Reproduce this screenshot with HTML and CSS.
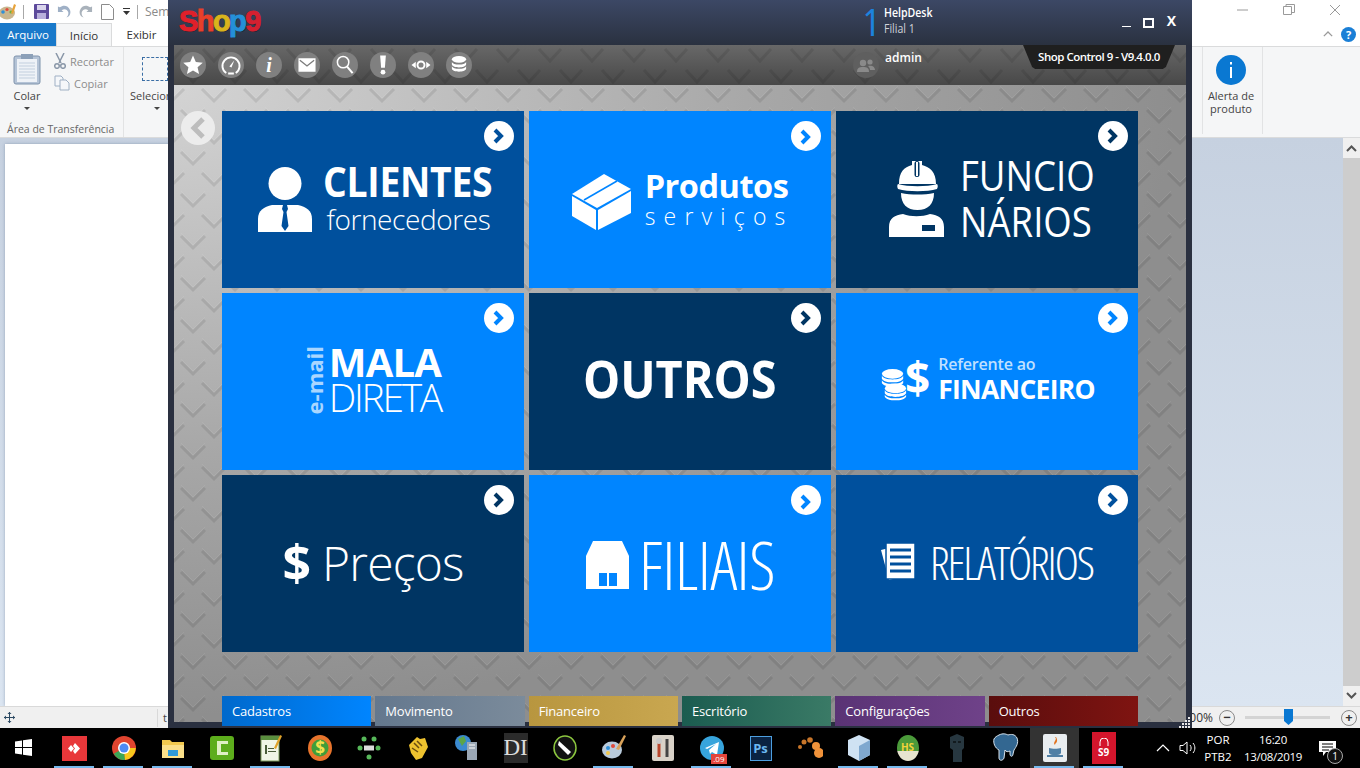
FILE: index.html
```html
<!DOCTYPE html>
<html lang="pt-BR">
<head>
    <meta charset="UTF-8" />
    <title>Shop Control 9</title>
    <link rel="stylesheet" href="styles.css">
</head>
<body>
    <div class="desktop">
        <!-- paint behind the shop window -->
        <div class="paint">
            <div class="qat">
                <svg width="17" height="18" viewBox="0 0 17 18"><ellipse cx="7" cy="10" rx="8" ry="6.500" fill="#c9b68e"/><circle cx="3" cy="9" r="1.800" fill="#2f8fd8"/><circle cx="7" cy="6.500" r="1.600" fill="#e04a3a"/><circle cx="11" cy="9" r="1.600" fill="#6cb33f"/><path d="M14 1l2 1-3 9-2-1z" fill="#e8a33a"/></svg>
                <span class="qat-sep"></span>
                <svg width="15" height="15" viewBox="0 0 15 15"><rect width="15" height="15" rx="1" fill="#5d4a9b"/><rect x="3" y="1" width="9" height="5" fill="#d9d4ec"/><rect x="3" y="9" width="9" height="6" fill="#b9b0dc"/></svg>
                <svg width="14" height="14" viewBox="0 0 15 14"><path d="M1 1v6h6L5 5c3-2 6-1 7 2 .5 2 0 4-2 6 4-1 5-5 4-8-2-5-7-6-11-3z" fill="#9fb0c6"/></svg>
                <svg width="14" height="14" viewBox="0 0 15 14"><path d="M14 1v6H8l2-2C7 3 4 4 3 7c-.5 2 0 4 2 6-4-1-5-5-4-8 2-5 7-6 11-3z" fill="#a9b2bb"/></svg>
                <svg width="13" height="16" viewBox="0 0 13 16"><path d="M.5.5h8l4 4v11H.5z" fill="#fff" stroke="#8c8c8c"/></svg>
                <svg width="9" height="7" viewBox="0 0 9 7"><path d="M1 0h7v1H1zM1 3h7L4.500 7z" fill="#333"/></svg>
                <span class="qat-sep"></span>
                <span class="qat-title">Sem</span>
                <div class="win-btns">
                    <svg width="14" height="14" viewBox="0 0 14 14"><path d="M1 7h11" stroke="#9a9a9a"/></svg>
                    <svg width="14" height="14" viewBox="0 0 14 14"><path d="M1.500 3.500h8v8h-8zM4 3.500v-2h8.500v8h-3" fill="none" stroke="#9a9a9a"/></svg>
                    <svg width="14" height="14" viewBox="0 0 14 14"><path d="M2 2l10 10M12 2L2 12" stroke="#9a9a9a"/></svg>
                </div>
            </div>
            <div class="tabs">
                <span class="tab tab-file">Arquivo</span>
                <span class="tab tab-on">Início</span>
                <span class="tab tab-view">Exibir</span>
                <div class="tabs-right">
                    <svg width="10" height="7" viewBox="0 0 12 8"><path d="M1 6l5-5 5 5" fill="none" stroke="#9a9a9a" stroke-width="1.500"/></svg>
                    <span class="help">?</span>
                </div>
            </div>
            <div class="ribbon">
                <div class="group group-clip">
                    <div class="group-body">
                        <div class="big-btn">
                            <svg width="28" height="32" viewBox="0 0 28 32"><rect x="1" y="3" width="26" height="28" rx="2" fill="#b4c3d6" stroke="#7f93ac"/><rect x="4" y="6" width="20" height="23" fill="#eef2f7"/><path d="M6 10h16M6 13h16M6 16h16M6 19h16M6 22h16M6 25h16" stroke="#c2cfde"/><rect x="8" y="1" width="12" height="5" fill="#8ca0b8"/></svg>
                            <span>Colar</span>
                            <i class="caret"></i>
                        </div>
                        <div class="small-btns">
                            <span class="small-btn"><svg width="12" height="16" viewBox="0 0 12 16"><path d="M2 0l5 10M10 0L5 10" stroke="#8a97a8" stroke-width="1.500"/><circle cx="3" cy="13" r="2.300" fill="none" stroke="#8a97a8" stroke-width="1.500"/><circle cx="9" cy="13" r="2.300" fill="none" stroke="#8a97a8" stroke-width="1.500"/></svg>Recortar</span>
                            <span class="small-btn"><svg width="16" height="16" viewBox="0 0 16 16"><path d="M1 1h6l2 2v8H1z" fill="#f5f7fa" stroke="#9fb0c4"/><path d="M6 5h6l3 3v7H6z" fill="#f5f7fa" stroke="#9fb0c4"/></svg>Copiar</span>
                        </div>
                    </div>
                    <span class="group-name">Área de Transferência</span>
                </div>
                <div class="group-select">
                    <span class="dash"></span>
                    <span>Selecionar</span>
                    <i class="caret"></i>
                </div>
                <div class="group-alert">
                    <svg width="30" height="30" viewBox="0 0 30 30"><circle cx="15" cy="15" r="15" fill="#0a78d2"/><rect x="14" y="7" width="2" height="2.500" fill="#fff"/><rect x="14" y="12" width="2" height="11" fill="#fff"/></svg>
                    <span>Alerta de<br>produto</span>
                </div>
            </div>
            <div class="work">
                <div class="canvas"></div>
                <div class="scroll">
                    <svg width="11" height="7" viewBox="0 0 11 7"><path d="M1 6l4.500-4.500L10 6" fill="none" stroke="#555" stroke-width="2"/></svg>
                    <div class="scroll-thumb"></div>
                    <svg width="11" height="7" viewBox="0 0 11 7"><path d="M1 1l4.500 4.500L10 1" fill="none" stroke="#555" stroke-width="2"/></svg>
                </div>
            </div>
            <div class="status">
                <svg width="11" height="11" viewBox="0 0 11 11"><path d="M5.500 0v11M0 5.500h11" stroke="#2c4a63"/><path d="M5.500 0l-2 2h4zM5.500 11l-2-2h4zM0 5.500l2-2v4zM11 5.500l-2-2v4z" fill="#2c4a63"/></svg>
                <span class="status-sep"></span>
                <span class="status-clip">t</span>
                <div class="zoom">
                    <span class="zoom-pct">100%</span>
                    <span class="zoom-btn">&minus;</span>
                    <div class="zoom-track"><span class="zoom-thumb"></span></div>
                    <span class="zoom-btn">+</span>
                </div>
            </div>
        </div>

        <!-- shop control window -->
        <div class="shop">
            <div class="shop-title">
                <div class="logo"><b class="l-s">S</b><b class="l-h">h</b><b class="l-o">o</b><b class="l-p">p</b><b class="l-9">9</b></div>
                <div class="branch">
                    <span class="branch-num">1</span>
                    <div class="branch-text">
                        <strong>HelpDesk</strong>
                        <span>Filial 1</span>
                    </div>
                </div>
                <div class="shop-btns">
                    <span class="btn-min"></span>
                    <span class="btn-max"></span>
                    <span class="btn-close">X</span>
                </div>
            </div>
            <div class="toolbar">
                <span class="tool"><svg width="22" height="22" viewBox="0 0 22 22"><path d="M11 1l3 6.800 7.300.7-5.500 4.900 1.600 7.200L11 16.900l-6.400 3.700 1.600-7.200L.7 8.500 8 7.800z" fill="#fff"/></svg></span>
                <span class="tool"><svg width="22" height="22" viewBox="0 0 22 22"><path d="M6 19.500a9 9 0 1 1 10 0" fill="none" stroke="#fff" stroke-width="2"/><path d="M14.500 6l-3 7.500-2.200-1z" fill="#fff"/><path d="M8 20h6" stroke="#fff" stroke-width="2"/></svg></span>
                <span class="tool"><svg width="22" height="22" viewBox="0 0 22 22"><text x="11" y="18" text-anchor="middle" class="tool-i">i</text></svg></span>
                <span class="tool"><svg width="22" height="22" viewBox="0 0 22 22"><path d="M2 4h18v14H2z" fill="#fff"/><path d="M3.500 6L11 12l7.500-6" fill="none" stroke="#7d7d7d" stroke-width="1.500"/></svg></span>
                <span class="tool"><svg width="22" height="22" viewBox="0 0 22 22"><circle cx="9" cy="8" r="6" fill="none" stroke="#fff" stroke-width="1.600"/><path d="M13 12.500l6 7" stroke="#fff" stroke-width="2.200"/></svg></span>
                <span class="tool"><svg width="22" height="22" viewBox="0 0 22 22"><path d="M8 1h6l-1 13H9z" fill="#fff"/><circle cx="11" cy="18.500" r="2.500" fill="#fff"/></svg></span>
                <span class="tool"><svg width="22" height="22" viewBox="0 0 22 22"><circle cx="11" cy="11" r="3.700" fill="none" stroke="#fff" stroke-width="2"/><path d="M5.500 7.500L1 11l4.500 3.500zM16.500 7.500L21 11l-4.500 3.500z" fill="#fff"/></svg></span>
                <span class="tool"><svg width="22" height="22" viewBox="0 0 22 22"><ellipse cx="11" cy="5" rx="7.500" ry="3.500" fill="#fff"/><path d="M3.500 7.500c1 4 14 4 15 0v3c-1 4-14 4-15 0zM3.500 12c1 4 14 4 15 0v3c-1 4-14 4-15 0z" fill="#fff"/></svg></span>
                <div class="user">
                    <span class="user-icon"><svg width="18" height="14" viewBox="0 0 18 14"><circle cx="6" cy="5" r="3.200" fill="#8a8a8a"/><path d="M0 14c0-4 2-5 6-5s6 1 6 5z" fill="#8a8a8a"/><circle cx="13" cy="4" r="2.600" fill="#8a8a8a"/><path d="M11 8c3-1 7 0 7 4h-5c0-2-1-3-2-4z" fill="#8a8a8a"/></svg></span>
                    <span class="user-name">admin</span>
                </div>
                <span class="version">Shop Control 9 - V9.4.0.0</span>
            </div>
            <div class="main">
                <span class="back"><svg width="18" height="22" viewBox="0 0 18 22"><path d="M14 2L5 11l9 9" fill="none" stroke="#bdbdbd" stroke-width="5"/></svg></span>
                <div class="tiles">
                    <div class="tile mid tile-clientes">
                        <span class="go"><svg width="14" height="16" viewBox="0 0 14 16"><path d="M3 2l6 6-6 6" fill="none" stroke="currentColor" stroke-width="4"/></svg></span>
                        <svg width="54" height="65" viewBox="0 0 54 65"><circle cx="27" cy="16.500" r="16.500" fill="#fff"/><path d="M0 65V52c0-9 6-12 14-14h26c8 2 14 5 14 14v13z" fill="#fff"/><path d="M25 38h4l1 4-1.500 3 2 14-3.500 5-3.500-5 2-14-1.500-3z" class="cut"/></svg>
                        <div class="stack">
                            <span class="t-clientes">CLIENTES</span>
                            <span class="t-fornec">fornecedores</span>
                        </div>
                    </div>
                    <div class="tile bright tile-produtos">
                        <span class="go"><svg width="14" height="16" viewBox="0 0 14 16"><path d="M3 2l6 6-6 6" fill="none" stroke="currentColor" stroke-width="4"/></svg></span>
                        <svg width="59" height="56" viewBox="0 0 59 56"><path d="M32 0l27 15-34 19L0 20z" fill="#fff"/><path d="M0 22l24 14v20L0 42z" fill="#fff"/><path d="M26 36l33-19v22L26 56z" fill="#fff"/><path d="M12 26L45 7" class="cut-line"/></svg>
                        <div class="stack">
                            <span class="t-produtos">Produtos</span>
                            <span class="t-servicos">serviços</span>
                        </div>
                    </div>
                    <div class="tile dark tile-func">
                        <span class="go"><svg width="14" height="16" viewBox="0 0 14 16"><path d="M3 2l6 6-6 6" fill="none" stroke="currentColor" stroke-width="4"/></svg></span>
                        <svg width="55" height="77" viewBox="0 0 55 77"><path d="M10 24C10 12 15 7 23 5V1h10v4c8 2 14 7 14 19z" fill="#fff"/><rect x="25.500" y="1" width="5" height="16" rx="2.500" class="cut"/><rect x="27" y="2" width="2" height="14" fill="#fff"/><path d="M9 24c10 3 29 3 39 0 1 1 1 3 0 5-10 3-29 3-39 0-1-2-1-4 0-5z" fill="#fff"/><path d="M12 33c10 2 23 2 33 0 0 11-6 17-16.500 17S12 44 12 33z" fill="#fff"/><path d="M0 77V67c0-9 6-12 14-13 8 3 19 3 27 0 8 1 14 4 14 13v10z" fill="#fff"/><rect x="33" y="65" width="13" height="6" class="cut"/></svg>
                        <div class="stack stack-func">
                            <span>FUNCIO</span>
                            <span>NÁRIOS</span>
                        </div>
                    </div>
                    <div class="tile bright tile-mala">
                        <span class="go"><svg width="14" height="16" viewBox="0 0 14 16"><path d="M3 2l6 6-6 6" fill="none" stroke="currentColor" stroke-width="4"/></svg></span>
                        <span class="t-email">e-mail</span>
                        <div class="stack">
                            <span class="t-mala">MALA</span>
                            <span class="t-direta">DIRETA</span>
                        </div>
                    </div>
                    <div class="tile dark tile-outros">
                        <span class="go"><svg width="14" height="16" viewBox="0 0 14 16"><path d="M3 2l6 6-6 6" fill="none" stroke="currentColor" stroke-width="4"/></svg></span>
                        <span class="t-outros">OUTROS</span>
                    </div>
                    <div class="tile bright tile-fin">
                        <span class="go"><svg width="14" height="16" viewBox="0 0 14 16"><path d="M3 2l6 6-6 6" fill="none" stroke="currentColor" stroke-width="4"/></svg></span>
                        <div class="fin-icon">
                            <svg class="coins" width="29" height="32" viewBox="0 0 26 33"><ellipse cx="12" cy="5" rx="11" ry="5" fill="#fff"/><path d="M1 7c2 5 20 5 22 0v3c-2 5-20 5-22 0zM1 11.500c2 5 20 5 22 0v3c-2 5-20 5-22 0z" fill="#fff"/><ellipse cx="15" cy="20" rx="11" ry="5" fill="#fff"/><path d="M4 22c2 5 20 5 22 0v3c-2 5-20 5-22 0zM4 26.500c2 5 20 5 22 0v2c-2 5-20 5-22 0z" fill="#fff"/></svg>
                            <span class="t-dollar">$</span>
                        </div>
                        <div class="stack">
                            <span class="t-ref">Referente ao</span>
                            <span class="t-fin">FINANCEIRO</span>
                        </div>
                    </div>
                    <div class="tile dark tile-precos">
                        <span class="go"><svg width="14" height="16" viewBox="0 0 14 16"><path d="M3 2l6 6-6 6" fill="none" stroke="currentColor" stroke-width="4"/></svg></span>
                        <span class="t-pdollar">$</span>
                        <span class="t-precos">Preços</span>
                    </div>
                    <div class="tile bright tile-filiais">
                        <span class="go"><svg width="14" height="16" viewBox="0 0 14 16"><path d="M3 2l6 6-6 6" fill="none" stroke="currentColor" stroke-width="4"/></svg></span>
                        <svg width="43" height="48" viewBox="0 0 43 48"><path d="M7 0h29l7 15v33H0V15z" fill="#fff"/><rect x="13" y="32" width="8" height="13" class="cut"/><rect x="23" y="32" width="8" height="13" class="cut"/></svg>
                        <span class="t-filiais">FILIAIS</span>
                    </div>
                    <div class="tile mid tile-rel">
                        <span class="go"><svg width="14" height="16" viewBox="0 0 14 16"><path d="M3 2l6 6-6 6" fill="none" stroke="currentColor" stroke-width="4"/></svg></span>
                        <svg width="35" height="38" viewBox="0 0 35 38"><path d="M0 7l12-3 8 30-12 3z" fill="#fff"/><rect x="5" y="0" width="29" height="36" fill="#fff" stroke="#00509d" stroke-width="1.500"/><path d="M9 7h21M9 14h21M9 21h21M9 28h21" class="cut-line thick"/></svg>
                        <span class="t-rel">RELATÓRIOS</span>
                    </div>
                </div>
                <div class="mods">
                    <span class="mod m-cad">Cadastros</span>
                    <span class="mod m-mov">Movimento</span>
                    <span class="mod m-fin">Financeiro</span>
                    <span class="mod m-esc">Escritório</span>
                    <span class="mod m-con">Configurações</span>
                    <span class="mod m-out">Outros</span>
                </div>
            </div>
            <svg class="grip" width="12" height="12" viewBox="0 0 12 12"><path d="M9 1h2v2H9zM6 4h2v2H6zM9 4h2v2H9zM3 7h2v2H3zM6 7h2v2H6zM9 7h2v2H9zM0 10h2v2H0zM3 10h2v2H3zM6 10h2v2H6zM9 10h2v2H9z" fill="#e8e8e8"/></svg>
        </div>

        <!-- taskbar -->
        <div class="taskbar">
            <span class="start"><svg width="17" height="17" viewBox="0 0 17 17"><path d="M0 2.500l7-1v6.500H0zM8 1.300L17 0v8H8zM0 9h7v6.500l-7-1zM8 9h9v8l-9-1.300z" fill="#fff"/></svg></span>
            <div class="apps">
                <span class="app open"><svg width="25" height="25" viewBox="0 0 25 25"><rect width="25" height="25" fill="#e8373a"/><path d="M13 7l5 5.500-5 5.500-2-3 2-2.500-2-2.500z" fill="#fff"/><path d="M9 9l3 3.500L9 16l-3-3.500z" fill="#fff"/></svg></span>
                <span class="app open"><svg width="24" height="24" viewBox="0 0 24 24"><circle cx="12" cy="12" r="12" fill="#e0442f"/><path d="M12 12L1.800 17.800A12 12 0 0 0 13 24z" fill="#3aa757"/><path d="M12 12h11.800A12 12 0 0 1 13 24z" fill="#f8c81c"/><circle cx="12" cy="12" r="6" fill="#fff"/><circle cx="12" cy="12" r="4.500" fill="#4c8bf5"/></svg></span>
                <span class="app open"><svg width="22" height="22" viewBox="0 0 22 22"><path d="M0 3h8l2 2h12v16H0z" fill="#f2c94f"/><rect y="8" width="22" height="13" fill="#fbe08a"/><rect x="6" y="13" width="10" height="6" fill="#2f9ad8"/></svg></span>
                <span class="app"><svg width="24" height="24" viewBox="0 0 24 24"><rect width="24" height="24" rx="3" fill="#5dad1c"/><path d="M18 5H7v14h11v-3h-7V8h7z" fill="#dff0c4"/></svg></span>
                <span class="app open"><svg width="22" height="28" viewBox="0 0 22 28"><rect x="1" y="2" width="18" height="25" fill="#f0f5e6" stroke="#7b9a5a"/><rect x="1" y="2" width="18" height="4" fill="#5a8f3e"/><path d="M5 11h2v9H5zM8 14h6v1H8zM8 17h8v1H8z" fill="#4a5d3a"/><path d="M20 1l2 1-6 13-2-1z" fill="#e0a32a"/></svg></span>
                <span class="app"><svg width="24" height="26" viewBox="0 0 24 26"><ellipse cx="12" cy="13" rx="12" ry="13" fill="#e8742c"/><circle cx="12" cy="13" r="8.500" fill="#3f9e3a"/><text x="12" y="19" text-anchor="middle" class="app-s">$</text></svg></span>
                <span class="app"><svg width="24" height="24" viewBox="0 0 24 24"><g fill="#57b85a"><circle cx="7" cy="3" r="2.500"/><circle cx="17" cy="3" r="2.500"/><circle cx="3" cy="12" r="2.500"/><circle cx="21" cy="12" r="2.500"/><circle cx="12" cy="21" r="2.500"/></g><rect x="7" y="9.500" width="10" height="5" fill="#ddd"/></svg></span>
                <span class="app"><svg width="24" height="26" viewBox="0 0 24 26"><path d="M3 10l8-8 3 2 5-1 3 9-6 11-6 2-5-7z" fill="#eec22f"/><path d="M8 8l5 5M11 6l5 5M6 13l6 4" stroke="#6b4d10" stroke-width="1.500"/></svg></span>
                <span class="app"><svg width="24" height="28" viewBox="0 0 24 28"><circle cx="8" cy="9" r="8" fill="#3b8ad0"/><path d="M3 5l6-3 2 5-4 5z" fill="#5ca548"/><rect x="12" y="8" width="10" height="18" fill="#9aa7b5"/><path d="M14 11h6M14 14h6" stroke="#fff"/></svg></span>
                <span class="app"><span class="di">DI</span></span>
                <span class="app"><svg width="24" height="26" viewBox="0 0 24 26"><ellipse cx="12" cy="13" rx="11" ry="12" fill="#111" stroke="#8cc63f" stroke-width="1.500"/><path d="M6 6l12 11-3 3L5 10z" fill="#fff"/></svg></span>
                <span class="app open"><svg width="24" height="26" viewBox="0 0 24 26"><ellipse cx="10" cy="15" rx="10" ry="8.500" fill="#b9cbdc"/><circle cx="6" cy="13" r="2" fill="#2f8fd8"/><circle cx="11" cy="11" r="2" fill="#e04a3a"/><circle cx="6" cy="18" r="2" fill="#f2c94f"/><path d="M22 0l2 1-7 14-3-1z" fill="#d9a25a"/></svg></span>
                <span class="app"><svg width="22" height="26" viewBox="0 0 22 26"><rect width="22" height="26" rx="2" fill="#d9d2c8"/><path d="M7 4v18" stroke="#b8452b" stroke-width="3"/><path d="M15 4v18" stroke="#444" stroke-width="3"/><circle cx="7" cy="6" r="3" fill="#c9c9c9"/></svg></span>
                <span class="app open"><span class="tg"><svg width="24" height="24" viewBox="0 0 24 24"><circle cx="12" cy="12" r="12" fill="#37a4dc"/><path d="M5 12l14-6-2 13-5-3-2 2-1-4 7-6-9 5z" fill="#fff"/></svg><b class="tg-badge">.09</b></span></span>
                <span class="app"><span class="ps">Ps</span></span>
                <span class="app"><svg width="26" height="24" viewBox="0 0 26 24"><g fill="#c9762a"><circle cx="3" cy="11" r="2"/><circle cx="7" cy="6" r="2.500"/><circle cx="13" cy="4" r="2.800"/></g><circle cx="19" cy="10" r="4" fill="#f0923a"/><circle cx="22" cy="17" r="5" fill="#f0923a"/></svg></span>
                <span class="app open"><svg width="22" height="26" viewBox="0 0 22 26"><path d="M11 0l11 5v15l-11 6L0 20V5z" fill="#cfe2f3"/><path d="M11 11l11-6v15l-11 6z" fill="#7fa8cf"/></svg></span>
                <span class="app open"><span class="hs">HS</span></span>
                <span class="app"><svg width="18" height="28" viewBox="0 0 18 28"><path d="M2 3l7-3 7 3v11l-2 2v12H5V16l-3-2z" fill="#273740"/><path d="M5 8h3M10 8h3" stroke="#121a1e" stroke-width="2"/></svg></span>
                <span class="app"><svg width="26" height="30" viewBox="0 0 26 30"><path d="M6 2c4-2 7-1 9 0 3-1 7-1 9 3 2 5-1 9-3 12l-1 4c0 3-3 3-3 0v-3c-2 1-4 1-5-1l-1 8c-1 3-5 3-5 0v-8C2 15 0 10 1 6c1-2 3-3 5-4z" fill="#336791" stroke="#d8e4ee"/></svg></span>
                <span class="app open active"><svg width="24" height="28" viewBox="0 0 24 28"><rect width="24" height="28" rx="2" fill="#e9edf0"/><path d="M12 3c3 3-3 5 0 8 0-2 4-3 1-8z" fill="#e2711d"/><path d="M6 14c3 1 9 1 12 0v5c-1 3-11 3-12 0z" fill="#4f7fa5"/><path d="M4 22h16" stroke="#4f7fa5" stroke-width="2"/></svg></span>
                <span class="app open"><span class="s9"><svg width="12" height="8" viewBox="0 0 12 8"><path d="M2 8V4a4 4 0 0 1 8 0v4" fill="none" stroke="#fff"/></svg><b>S9</b></span></span>
            </div>
            <div class="tray">
                <svg width="14" height="8" viewBox="0 0 14 8"><path d="M1 7l6-6 6 6" fill="none" stroke="#fff" stroke-width="1.200"/></svg>
                <svg class="tray-vol" width="18" height="16" viewBox="0 0 18 16"><path d="M1 5.500h3L8 2v12l-4-3.500H1z" fill="none" stroke="#fff"/><path d="M11 5c1.500 2 1.500 4 0 6M14 3c2.500 3 2.500 7 0 10" fill="none" stroke="#fff"/></svg>
                <div class="tray-lang"><span>POR</span><span>PTB2</span></div>
                <div class="tray-clock"><span>16:20</span><span>13/08/2019</span></div>
                <span class="notif">
                    <svg width="17" height="15" viewBox="0 0 17 15"><path d="M0 0h17v11H7l-3 4v-4H0z" fill="#fff"/><path d="M3 3h11M3 6h11M3 9h7" stroke="#000"/></svg>
                    <b class="notif-n">1</b>
                </span>
            </div>
        </div>
    </div>
</body>
</html>
```

FILE: styles.css
```css
* {
    box-sizing: border-box;
}
body {
    margin: 0;
    background: #000;
    font-family: "Open Sans", sans-serif;
    overflow: hidden;
}
svg {
    display: block;
    flex: none;
}
.desktop {
    position: relative;
    width: 1360px;
    height: 768px;
    overflow: hidden;
}

/* paint */
.paint {
    height: 728px;
    display: flex;
    flex-direction: column;
    background: #fff;
    color: #444;
    font-size: 11px;
}
.qat {
    height: 23px;
    display: flex;
    align-items: center;
    gap: 8px;
    flex: none;
}
.qat-sep {
    width: 1px;
    height: 14px;
    background: #a8a8a8;
    margin: 0 2px 0 -2px;
}
.qat-title {
    color: #8a8a8a;
    font-size: 12px;
    margin-left: -3px;
}
.win-btns {
    margin-left: auto;
    display: flex;
    gap: 32px;
    padding-right: 18px;
    margin-top: -3px;
}
.tabs {
    height: 23px;
    display: flex;
    align-items: stretch;
    flex: none;
}
.tab {
    display: flex;
    align-items: center;
    justify-content: center;
    width: 56px;
    font-size: 11.500px;
    color: #333;
}
.tab-file {
    background: #1979ca;
    color: #fff;
}
.tab-on {
    background: #f5f6f7;
    border: 1px solid #dadbdc;
    border-bottom: 0;
}
.tab-view {
    padding-left: 3px;
}
.tabs-right {
    margin-left: auto;
    display: flex;
    align-items: center;
    gap: 8px;
    padding-right: 4px;
}
.help {
    width: 15px;
    height: 15px;
    border-radius: 50%;
    background: #1a7fd6;
    color: #fff;
    font-weight: 700;
    font-size: 11px;
    line-height: 15px;
    text-align: center;
}
.ribbon {
    height: 92px;
    flex: none;
    display: flex;
    background: #f5f6f7;
    border-top: 1px solid #dadbdc;
    border-bottom: 1px solid #dadbdc;
    text-align: center;
}
.group-clip {
    width: 124px;
    border-right: 1px solid #e2e3e4;
    display: flex;
    flex-direction: column;
}
.group-body {
    display: flex;
    flex: 1;
}
.group-name {
    font-size: 10.500px;
    color: #666;
    white-space: nowrap;
    text-align: left;
    padding: 0 0 0 7px;
    line-height: 14px;
    margin-bottom: 1px;
}
.big-btn {
    width: 54px;
    display: flex;
    flex-direction: column;
    align-items: center;
    padding-top: 6px;
}
.big-btn span {
    margin-top: 4px;
    line-height: 14px;
}
.caret {
    display: block;
    margin-top: 4px;
    border: 3px solid transparent;
    border-top-color: #444;
    border-bottom: 0;
}
.small-btns {
    display: flex;
    flex-direction: column;
    gap: 6px;
    padding-top: 6px;
    color: #8c8c8c;
}
.small-btn {
    display: flex;
    align-items: center;
    gap: 4px;
    height: 16px;
}
.group-select {
    width: 46px;
    margin-left: 6px;
    display: flex;
    flex-direction: column;
    padding-top: 10px;
    white-space: nowrap;
    text-align: left;
}
.dash {
    display: block;
    width: 26px;
    height: 24px;
    margin: 0 0 7px 12px;
    border: 1px dashed #3a6ea5;
    flex: none;
}
.group-select .caret {
    margin-left: 24px;
    width: 0;
}
.group-alert {
    margin-left: auto;
    margin-right: 97px;
    width: 61px;
    margin-bottom: 3px;
    border-left: 1px solid #e2e3e4;
    border-right: 1px solid #e2e3e4;
    display: flex;
    flex-direction: column;
    align-items: center;
    padding: 8px 3px 0 0;
    line-height: 13px;
}
.group-alert span {
    margin-top: 4px;
}
.work {
    flex: 1;
    display: flex;
    min-height: 0;
    background: linear-gradient(#c6d1e0, #dbe5f1);
    padding-left: 5px;
}
.canvas {
    width: 300px;
    margin-top: 6px;
    background: #fff;
    box-shadow: 0 0 3px rgba(70, 90, 120, 0.4);
}
.scroll {
    margin-left: auto;
    width: 17px;
    background: #f0f0f0;
    display: flex;
    flex-direction: column;
    align-items: center;
    justify-content: space-between;
    padding: 7px 0;
}
.scroll-thumb {
    flex: 1;
    width: 17px;
    margin: 6px 0;
    background: #cdcdcd;
}
.status {
    height: 22px;
    flex: none;
    background: #f0f0f0;
    border-top: 1px solid #d9d9d9;
    display: flex;
    align-items: center;
    padding-left: 4px;
}
.status-sep {
    width: 1px;
    height: 18px;
    background: #d9d9d9;
    margin-left: 142px;
}
.status-clip {
    margin-left: 5px;
}
.zoom {
    margin-left: auto;
    display: flex;
    align-items: center;
    font-size: 12px;
    color: #333;
    padding-right: 3px;
}
.zoom-pct {
    margin-right: 6px;
}
.zoom-btn {
    width: 16px;
    height: 16px;
    border-radius: 50%;
    border: 1px solid #8a8a8a;
    line-height: 13px;
    text-align: center;
    font-weight: 700;
    font-size: 13px;
}
.zoom-track {
    position: relative;
    width: 85px;
    height: 3px;
    margin: 0 11px 0 10px;
    background: #d4d4d4;
}
.zoom-thumb {
    position: absolute;
    left: 39px;
    top: -7px;
    width: 9px;
    height: 16px;
    background: #0a78d2;
    clip-path: polygon(0 0, 100% 0, 100% 75%, 50% 100%, 0 75%);
}

/* shop window */
.shop {
    position: absolute;
    left: 168px;
    top: 0;
    width: 1024px;
    height: 728px;
    background: #2a3040;
    display: flex;
    flex-direction: column;
    padding: 0 6px 6px;
}
.shop-title {
    height: 45px;
    flex: none;
    margin: 0 -6px;
    background: linear-gradient(#3c4865, #2a3140);
    display: flex;
    color: #fff;
    position: relative;
}
.logo {
    font-family: "Liberation Sans", sans-serif;
    font-size: 29px;
    line-height: 32px;
    letter-spacing: -1.600px;
    padding: 5px 0 0 11px;
    width: 695px;
    flex: none;
    -webkit-text-stroke: 1px currentColor;
    text-shadow: 1px 1px 0 rgba(0, 0, 0, 0.35);
}
.l-s { color: #e0202a; }
.l-h { color: #e8402a; }
.l-o { color: #d9b41c; }
.l-p { color: #2490d8; }
.l-9 { color: #d42030; }
.branch {
    display: flex;
    padding-top: 2px;
}
.branch-num {
    font-size: 38px;
    line-height: 42px;
    margin-top: -2px;
    color: #1c82de;
    font-weight: 400;
    font-stretch: 75%;
    width: 21px;
}
.branch-text {
    display: flex;
    flex-direction: column;
    font-size: 12px;
    line-height: 16px;
    padding-top: 3px;
}
.branch-text > * {
    transform: scaleX(0.88);
    transform-origin: left;
}
.branch-text strong {
    font-weight: 600;
}
.branch-text span {
    color: #d0d3da;
}
.shop-btns {
    margin-left: auto;
    display: flex;
    align-items: flex-start;
    padding-right: 16px;
}
.btn-min {
    width: 9px;
    height: 1px;
    background: #fff;
    margin-top: 26px;
}
.btn-max {
    width: 11px;
    height: 10px;
    border: 2px solid #fff;
    margin: 18px 0 0 12px;
}
.btn-close {
    margin: 12px 0 0 13px;
    font-weight: 700;
    font-size: 14px;
    line-height: 18px;
}
.toolbar {
    height: 40px;
    flex: none;
    display: flex;
    align-items: center;
    gap: 12px;
    padding-left: 6px;
    background-color: #555;
    background-image: url("data:image/svg+xml,%3Csvg xmlns='http://www.w3.org/2000/svg' width='42' height='42'%3E%3Cg fill='none' stroke='%23000' stroke-opacity='.09' stroke-width='3'%3E%3Cpath d='M8 25l11 12 11-12M29 4l11 12 11-12M-13 4l11 12 11-12'/%3E%3C/g%3E%3C/svg%3E"), linear-gradient(#686868, #484848);
    position: relative;
}
.tool {
    width: 26px;
    height: 26px;
    border-radius: 50%;
    background: #808080;
    display: flex;
    align-items: center;
    justify-content: center;
}
.tool svg {
    transform: scale(0.95);
}
.tool-i {
    font-family: "Liberation Serif", serif;
    font-style: italic;
    font-weight: 700;
    font-size: 21px;
    fill: #fff;
}
.user {
    display: flex;
    align-items: flex-start;
    margin-left: 369px;
    gap: 6px;
    height: 26px;
}
.user-icon {
    width: 26px;
    height: 26px;
    border-radius: 50%;
    background: #5f5f5f;
    display: flex;
    align-items: center;
    justify-content: center;
}
.user-name {
    color: #fff;
    font-weight: 600;
    font-size: 12px;
    line-height: 14px;
    margin-top: -1px;
}
.version {
    position: absolute;
    right: 11px;
    top: 0;
    width: 152px;
    height: 24px;
    background: #1f1f1f;
    color: #fff;
    font-size: 11.500px;
    font-weight: 600;
    letter-spacing: -0.500px;
    text-align: center;
    line-height: 23px;
    clip-path: polygon(0 0, 100% 0, 94% 92%, 92% 100%, 8% 100%, 6% 92%);
}
.main {
    flex: 1;
    position: relative;
    min-height: 0;
    display: flex;
    flex-direction: column;
    padding: 26px 48px 0;
    background-color: #999;
    background-image: url("data:image/svg+xml,%3Csvg xmlns='http://www.w3.org/2000/svg' width='42' height='42'%3E%3Cg fill='none'%3E%3Cg stroke='%23000' stroke-opacity='.09' stroke-width='3'%3E%3Cpath d='M7 25l12 12 12-12M28 4l12 12 12-12M-14 4l12 12 12-12'/%3E%3C/g%3E%3Cg stroke='%23fff' stroke-opacity='.07' stroke-width='1'%3E%3Cpath d='M7 22l12 12 12-12M28 1l12 12 12-12M-14 1l12 12 12-12'/%3E%3C/g%3E%3C/g%3E%3C/svg%3E"), radial-gradient(farthest-corner at 0 0, #d4d4d4 0, #a8a8a8 40%, #8e8e8e 70%);
}
.back {
    position: absolute;
    left: 7px;
    top: 26px;
    width: 34px;
    height: 34px;
    border-radius: 50%;
    background: #ececec;
    display: flex;
    align-items: center;
    justify-content: center;
}
.tiles {
    display: grid;
    grid-template-columns: repeat(3, 302px);
    grid-auto-rows: 177px;
    gap: 5px;
}
.tile {
    --tile: #00509d;
    position: relative;
    background: var(--tile);
    color: #fff;
    display: flex;
    align-items: center;
    justify-content: center;
    white-space: nowrap;
}
.tile.mid { --tile: #00509d; }
.tile.bright { --tile: #0085ff; }
.tile.dark { --tile: #003563; }
.cut { fill: var(--tile); }
.cut-line {
    fill: none;
    stroke: var(--tile);
    stroke-width: 1.500;
}
.cut-line.thick {
    stroke-width: 3;
}
.go {
    position: absolute;
    top: 10px;
    right: 10px;
    width: 30px;
    height: 30px;
    border-radius: 50%;
    background: #fff;
    color: var(--tile);
    display: flex;
    align-items: center;
    justify-content: center;
}
.stack {
    display: flex;
    flex-direction: column;
}
.t-clientes {
    font-weight: 700;
    font-size: 41px;
    line-height: 42px;
    letter-spacing: -0.300px;
    transform: scaleX(0.91);
    transform-origin: left;
    margin-right: -17px;
}
.t-fornec {
    font-weight: 300;
    font-size: 28px;
    line-height: 34px;
    letter-spacing: -0.400px;
    margin-left: 3px;
}
.tile-clientes {
    gap: 11px;
    padding: 0 0 0 5px;
}
.tile-clientes .stack {
    padding-bottom: 4px;
}
.tile-produtos {
    gap: 14px;
    padding-top: 3px;
}
.tile-produtos svg {
    margin-top: 2px;
}
.tile-produtos .stack {
    padding-bottom: 3px;
}
.t-produtos {
    font-weight: 700;
    font-size: 32.500px;
    line-height: 32px;
    letter-spacing: -0.500px;
}
.t-servicos {
    font-weight: 300;
    font-size: 23px;
    line-height: 28px;
    letter-spacing: 8.200px;
    margin-right: -8px;
}
.tile-func {
    gap: 16px;
    padding: 0 0 3px 10px;
}
.stack-func {
    font-size: 42px;
    line-height: 46px;
    font-weight: 400;
}
.stack-func span {
    transform: scaleX(0.87);
    transform-origin: left;
    margin-right: -20px;
}
.tile-mala {
    gap: 6px;
    padding: 0 0 3px 0;
}
.t-email {
    writing-mode: vertical-rl;
    transform: rotate(180deg);
    color: #a9d6ff;
    font-weight: 700;
    font-size: 22px;
    line-height: 18px;
}
.t-mala {
    font-weight: 700;
    font-size: 40px;
    line-height: 33px;
    letter-spacing: -0.800px;
}
.t-direta {
    font-weight: 300;
    font-size: 39px;
    line-height: 37px;
    letter-spacing: -2.300px;
}
.t-outros {
    font-weight: 700;
    font-size: 52px;
    line-height: 60px;
    margin: 0 -21px 8px 0;
    transform: scaleX(0.9);
    transform-origin: left;
}
.tile-fin {
    gap: 8px;
    padding-bottom: 5px;
}
.fin-icon {
    display: flex;
    align-items: flex-start;
    height: 42px;
}
.coins {
    margin-top: 11px;
}
.t-dollar {
    font-weight: 700;
    font-size: 44px;
    line-height: 38px;
    margin-left: -3px;
}
.t-ref {
    color: #bfe0ff;
    font-weight: 600;
    font-size: 16px;
    line-height: 20px;
    letter-spacing: -0.200px;
}
.t-fin {
    font-weight: 700;
    font-size: 26.500px;
    line-height: 30px;
    letter-spacing: -0.700px;
}
.tile-precos {
    gap: 11px;
    padding-bottom: 3px;
}
.t-pdollar {
    font-weight: 700;
    font-size: 50px;
    font-stretch: 88%;
}
.t-precos {
    font-weight: 300;
    font-size: 48px;
    letter-spacing: -0.800px;
}
.tile-filiais {
    gap: 10px;
    padding-left: 1px;
}
.tile-filiais svg {
    margin-top: 3px;
}
.t-filiais {
    font-weight: 300;
    font-size: 66px;
    line-height: 70px;
    font-stretch: 75%;
    letter-spacing: -0.500px;
}
.tile-rel {
    gap: 14px;
    padding-bottom: 4px;
}
.t-rel {
    font-weight: 300;
    font-size: 46px;
    line-height: 50px;
    font-stretch: 75%;
    letter-spacing: -2.100px;
}
.mods {
    margin-top: 44px;
    display: grid;
    grid-template-columns: repeat(6, 1fr);
    gap: 4px;
    height: 26px;
    color: #fff;
    font-size: 13px;
    line-height: 30px;
}
.mod {
    padding-left: 10px;
    letter-spacing: -0.200px;
}
.m-cad { background: linear-gradient(to right, #0069cc, #0085ff); }
.m-mov { background: linear-gradient(to right, #64788e, #7b8b9b); }
.m-fin { background: linear-gradient(to right, #b8963f, #c9a750); }
.m-esc { background: linear-gradient(to right, #1b5c50, #3a7a66); }
.m-con { background: linear-gradient(to right, #5a3375, #6f4289); }
.m-out { background: linear-gradient(to right, #5a0d0d, #7f1411); }
.grip {
    position: absolute;
    right: 1px;
    bottom: 0;
}

/* taskbar */
.taskbar {
    height: 40px;
    background: #000;
    display: flex;
    color: #fff;
    font-size: 12px;
}
.start {
    width: 50px;
    padding: 11px 0 0 15px;
    flex: none;
}
.apps {
    display: flex;
}
.app {
    width: 49px;
    height: 40px;
    display: flex;
    align-items: center;
    justify-content: center;
    position: relative;
}
.app.open::after {
    content: "";
    position: absolute;
    left: 4px;
    right: 5px;
    bottom: 0;
    height: 2px;
    background: #76b9ed;
}
.app.active {
    background: #333;
}
.app-s {
    font-weight: 700;
    font-size: 17px;
    fill: #f4e04d;
}
.di {
    width: 24px;
    height: 30px;
    background: #2b2b2b;
    font-family: "Liberation Serif", serif;
    font-size: 23px;
    line-height: 30px;
    text-align: center;
    color: #ddd;
}
.tg {
    position: relative;
    display: block;
}
.tg-badge {
    position: absolute;
    right: -3px;
    bottom: -4px;
    background: #e5453c;
    font-size: 8px;
    font-weight: 400;
    line-height: 10px;
    padding: 0 2px;
}
.ps {
    width: 22px;
    height: 25px;
    background: #0a2342;
    border: 1px solid #4d9fe0;
    color: #6cb8f2;
    font-weight: 700;
    font-size: 13px;
    line-height: 22px;
    text-align: center;
}
.hs {
    width: 22px;
    height: 26px;
    border-radius: 50%;
    background: linear-gradient(#4b9a3a 60%, #e7e4cf 60%);
    color: #f4d33b;
    font-weight: 700;
    font-size: 10px;
    line-height: 24px;
    text-align: center;
}
.s9 {
    width: 24px;
    height: 32px;
    background: #d4152c;
    display: flex;
    flex-direction: column;
    align-items: center;
    justify-content: center;
    font-size: 10px;
    line-height: 12px;
}
.tray {
    flex: 1;
    display: flex;
    align-items: center;
    padding-left: 28px;
}
.tray-vol {
    margin-left: 9px;
}
.tray-lang {
    display: flex;
    flex-direction: column;
    align-items: center;
    margin-left: 3px;
    width: 36px;
    line-height: 17px;
    font-size: 11.500px;
}
.tray-clock {
    display: flex;
    flex-direction: column;
    align-items: center;
    margin-left: 5px;
    width: 64px;
    line-height: 17px;
    font-size: 11.500px;
    letter-spacing: -0.300px;
}
.notif {
    position: relative;
    margin-left: 14px;
}
.notif-n {
    position: absolute;
    left: 8px;
    top: 7px;
    width: 16px;
    height: 16px;
    border-radius: 50%;
    background: #111;
    border: 1px solid #aaa;
    font-size: 10px;
    font-weight: 400;
    line-height: 14px;
    text-align: center;
}
```
